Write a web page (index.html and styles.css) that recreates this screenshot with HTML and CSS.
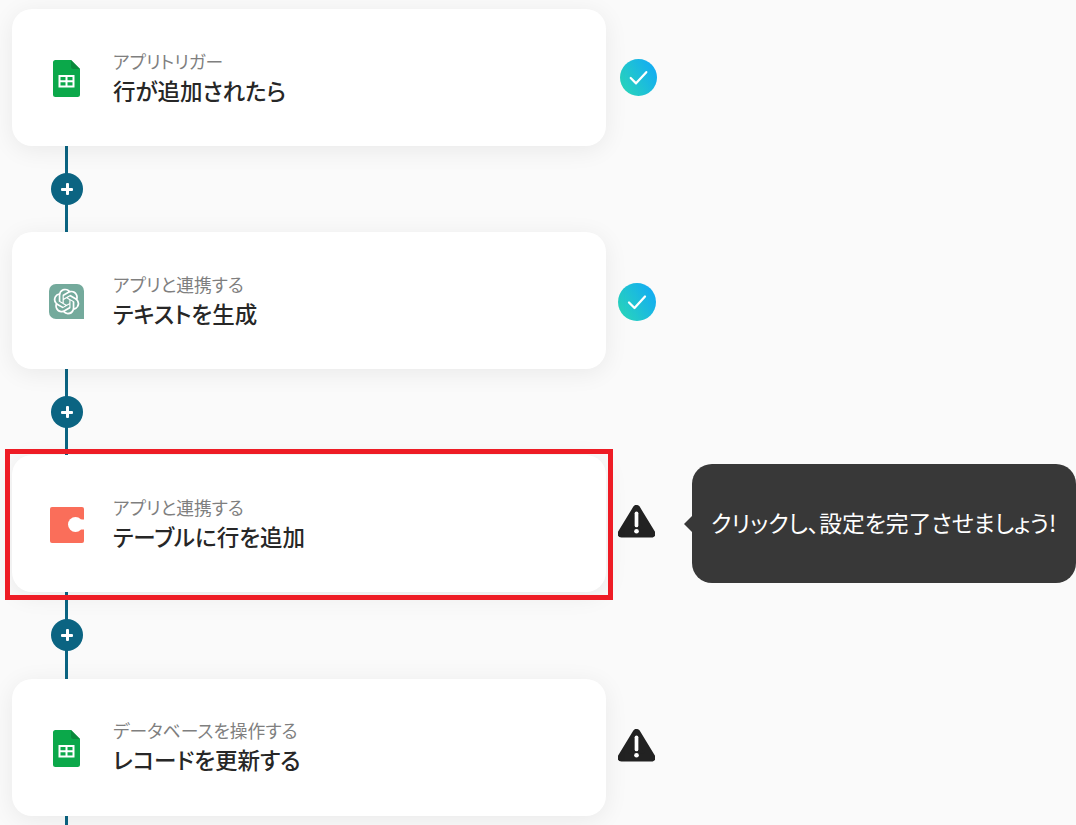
FILE: index.html
```html
<!DOCTYPE html>
<html lang="ja">
  <head>
    <meta charset="UTF-8">
    <title>フロー</title>
    <link rel="stylesheet" href="styles.css">
  </head>
  <body>
    <main class="flow">
      <div class="step">
        <div class="card">
          <div class="card-icon">
            <svg class="sheets" viewBox="0 0 27 37">
              <path d="M2.500 0H18l9 9v25.500a2.500 2.500 0 0 1-2.500 2.500h-22A2.500 2.500 0 0 1 0 34.500v-32A2.500 2.500 0 0 1 2.500 0z" fill="#0ba84a"/>
              <path d="M18 0l9 9h-6.500A2.500 2.500 0 0 1 18 6.500z" fill="#0a8a3c"/>
              <path d="M5.500 15h16v12.500h-16zM7.500 17v3.300h5V17zm7 0v3.300h5V17zm-7 5.200v3.300h5v-3.300zm7 0v3.300h5v-3.300z" fill="#fff" fill-rule="evenodd"/>
            </svg>
          </div>
          <div class="card-text">
            <p class="label">アプリトリガー</p>
            <p class="title">行が追加されたら</p>
          </div>
        </div>
        <svg class="status status-first" viewBox="0 0 38 38">
          <defs>
            <linearGradient id="done1" x1="0" y1="1" x2="1" y2="0.4">
              <stop offset="0" stop-color="#2bd9b4"/>
              <stop offset="1" stop-color="#14aef0"/>
            </linearGradient>
          </defs>
          <circle cx="19" cy="19" r="19" fill="url(#done1)"/>
          <path d="M11 19.500l5.500 5.500 10.500-11.500" fill="none" stroke="#fff" stroke-width="2.300" stroke-linecap="round" stroke-linejoin="round"/>
        </svg>
      </div>

      <div class="connector"><span class="plus"></span></div>

      <div class="step">
        <div class="card">
          <div class="card-icon">
            <svg class="gpt" viewBox="0 0 35 35">
              <path d="M7 0h21a7 7 0 0 1 7 7v28H7a7 7 0 0 1-7-7V7a7 7 0 0 1 7-7z" fill="#74aa9c"/>
              <g transform="translate(4.700 4.700) scale(1.070)">
                <path fill="#fff" d="M22.2819 9.8211a5.9847 5.9847 0 0 0-.5157-4.9108 6.0462 6.0462 0 0 0-6.5098-2.9A6.0651 6.0651 0 0 0 4.9807 4.1818a5.9847 5.9847 0 0 0-3.9977 2.9 6.0462 6.0462 0 0 0 .7427 7.0966 5.98 5.98 0 0 0 .511 4.9107 6.051 6.051 0 0 0 6.5146 2.9001A5.9847 5.9847 0 0 0 13.2599 24a6.0557 6.0557 0 0 0 5.7718-4.2058 5.9894 5.9894 0 0 0 3.9977-2.9001 6.0557 6.0557 0 0 0-.7475-7.0729zm-9.022 12.6081a4.4755 4.4755 0 0 1-2.8764-1.0408l.1419-.0804 4.7783-2.7582a.7948.7948 0 0 0 .3927-.6813v-6.7369l2.02 1.1686a.071.071 0 0 1 .038.052v5.5826a4.504 4.504 0 0 1-4.4945 4.4944zm-9.6607-4.1254a4.4708 4.4708 0 0 1-.5346-3.0137l.142.0852 4.783 2.7582a.7712.7712 0 0 0 .7806 0l5.8428-3.3685v2.3324a.0804.0804 0 0 1-.0332.0615L9.74 19.9502a4.4992 4.4992 0 0 1-6.1408-1.6464zM2.3408 7.8956a4.485 4.485 0 0 1 2.3655-1.9728V11.6a.7664.7664 0 0 0 .3879.6765l5.8144 3.3543-2.0201 1.1685a.0757.0757 0 0 1-.071 0l-4.8303-2.7865A4.504 4.504 0 0 1 2.3408 7.872zm16.5963 3.8558L13.1038 8.364 15.1192 7.2a.0757.0757 0 0 1 .071 0l4.8303 2.7913a4.4944 4.4944 0 0 1-.6765 8.1042v-5.6772a.79.79 0 0 0-.407-.667zm2.0107-3.0231l-.142-.0852-4.7735-2.7818a.7759.7759 0 0 0-.7854 0L9.409 9.2297V6.8974a.0662.0662 0 0 1 .0284-.0615l4.8303-2.7866a4.4992 4.4992 0 0 1 6.6802 4.66zM8.3065 12.863l-2.02-1.1638a.0804.0804 0 0 1-.038-.0567V6.0742a4.4992 4.4992 0 0 1 7.3757-3.4537l-.142.0805L8.704 5.459a.7948.7948 0 0 0-.3927.6813zm1.0976-2.3654l2.602-1.4998 2.6069 1.4998v2.9994l-2.5974 1.4997-2.6067-1.4997Z"/>
              </g>
            </svg>
          </div>
          <div class="card-text">
            <p class="label">アプリと連携する</p>
            <p class="title">テキストを生成</p>
          </div>
        </div>
        <svg class="status status-second" viewBox="0 0 38 38">
          <defs>
            <linearGradient id="done2" x1="0" y1="1" x2="1" y2="0.4">
              <stop offset="0" stop-color="#2bd9b4"/>
              <stop offset="1" stop-color="#14aef0"/>
            </linearGradient>
          </defs>
          <circle cx="19" cy="19" r="19" fill="url(#done2)"/>
          <path d="M11 19.500l5.500 5.500 10.500-11.500" fill="none" stroke="#fff" stroke-width="2.300" stroke-linecap="round" stroke-linejoin="round"/>
        </svg>
      </div>

      <div class="connector"><span class="plus"></span></div>

      <div class="step">
        <div class="card card-selected">
          <div class="card-icon">
            <svg class="coda" viewBox="0 0 34 36">
              <rect width="34" height="36" rx="2" fill="#fa6e5a"/>
              <circle cx="25.500" cy="17.500" r="7.500" fill="#fff"/>
              <rect x="31" y="12.500" width="3" height="10" fill="#fff"/>
            </svg>
          </div>
          <div class="card-text">
            <p class="label">アプリと連携する</p>
            <p class="title">テーブルに行を追加</p>
          </div>
        </div>
        <svg class="status warn" viewBox="0 0 38 34">
          <path d="M19 4L34.500 29.500H3.500z" fill="#222" stroke="#222" stroke-width="8" stroke-linejoin="round"/>
          <path d="M19 8.500v12.500" stroke="#fff" stroke-width="3.800" stroke-linecap="round"/>
          <circle cx="19" cy="27" r="2.400" fill="#fff"/>
        </svg>
        <div class="tooltip">クリックし、設定を完了させましょう!</div>
      </div>

      <div class="connector"><span class="plus"></span></div>

      <div class="step">
        <div class="card">
          <div class="card-icon">
            <svg class="sheets" viewBox="0 0 27 37">
              <path d="M2.500 0H18l9 9v25.500a2.500 2.500 0 0 1-2.500 2.500h-22A2.500 2.500 0 0 1 0 34.500v-32A2.500 2.500 0 0 1 2.500 0z" fill="#0ba84a"/>
              <path d="M18 0l9 9h-6.500A2.500 2.500 0 0 1 18 6.500z" fill="#0a8a3c"/>
              <path d="M5.500 15h16v12.500h-16zM7.500 17v3.300h5V17zm7 0v3.300h5V17zm-7 5.200v3.300h5v-3.300zm7 0v3.300h5v-3.300z" fill="#fff" fill-rule="evenodd"/>
            </svg>
          </div>
          <div class="card-text">
            <p class="label">データベースを操作する</p>
            <p class="title">レコードを更新する</p>
          </div>
        </div>
        <svg class="status warn" viewBox="0 0 38 34">
          <path d="M19 4L34.500 29.500H3.500z" fill="#222" stroke="#222" stroke-width="8" stroke-linejoin="round"/>
          <path d="M19 8.500v12.500" stroke="#fff" stroke-width="3.800" stroke-linecap="round"/>
          <circle cx="19" cy="27" r="2.400" fill="#fff"/>
        </svg>
      </div>

      <div class="connector connector-last"></div>
    </main>
  </body>
</html>
```

FILE: styles.css
```css
html, body {
  margin: 0;
  height: 100%;
  overflow: hidden;
}
body {
  background-color: #fafafa;
  color: #272727;
  font-family: "Noto Sans CJK JP", "Noto Sans", sans-serif;
}
.flow {
  padding: 9px 0 0 12px;
}
.step {
  display: flex;
  align-items: center;
}
.card {
  display: flex;
  align-items: center;
  gap: 29px;
  box-sizing: border-box;
  position: relative;
  width: 594px;
  height: 137px;
  padding-left: 37px;
  background-color: #fff;
  border-radius: 20px;
  box-shadow: 0 4px 24px rgba(0, 0, 0, 0.07);
}
.card-selected::after {
  content: "";
  position: absolute;
  top: -6px;
  left: -7px;
  right: -7px;
  bottom: -8px;
  border: 5px solid #ee1c25;
}
.card-icon {
  display: flex;
  justify-content: center;
  width: 35px;
  padding-top: 2px;
}
.sheets {
  width: 27px;
  height: 37px;
}
.gpt {
  width: 35px;
  height: 35px;
}
.coda {
  width: 34px;
  height: 36px;
}
.card-text {
  padding-bottom: 2px;
}
.card-text p {
  margin: 0;
  font-feature-settings: "palt";
}
.label {
  color: #7f7f7f;
  font-size: 17.800px;
  line-height: 26px;
}
.title {
  font-size: 22.500px;
  font-weight: 500;
  line-height: 32px;
}
.status {
  width: 38px;
  height: 38px;
  margin-left: 12px;
}
.status-first {
  width: 37px;
  height: 37px;
  margin-left: 14px;
}
.status-second {
  margin-top: 2px;
}
.warn {
  width: 37px;
  height: 33px;
  margin-bottom: 4px;
}
.tooltip {
  display: flex;
  align-items: center;
  position: relative;
  box-sizing: border-box;
  width: 384px;
  height: 119px;
  margin-left: 37px;
  padding: 0 0 2px 19px;
  background-color: #383838;
  border-radius: 20px;
  color: #fff;
  font-size: 22.800px;
  font-feature-settings: "palt";
  white-space: nowrap;
}
.tooltip::before {
  content: "";
  position: absolute;
  left: -8px;
  top: 50%;
  margin-top: -8px;
  border-style: solid;
  border-width: 8px 8px 8px 0;
  border-color: transparent #383838 transparent transparent;
}
.connector {
  display: flex;
  align-items: center;
  justify-content: center;
  width: 32px;
  height: 86.200px;
  margin-left: 39px;
  background: linear-gradient(#0b6482, #0b6482) 14px 0 / 3px 100% no-repeat;
}
.connector-last {
  height: 9px;
}
.plus {
  position: relative;
  width: 32px;
  height: 32px;
  border-radius: 50%;
  background-color: #0b6482;
}
.plus::before, .plus::after {
  content: "";
  position: absolute;
  background-color: #fff;
  border-radius: 1px;
}
.plus::before {
  left: 10px;
  top: 14.500px;
  width: 12px;
  height: 3px;
}
.plus::after {
  left: 14.500px;
  top: 10px;
  width: 3px;
  height: 12px;
}
```
